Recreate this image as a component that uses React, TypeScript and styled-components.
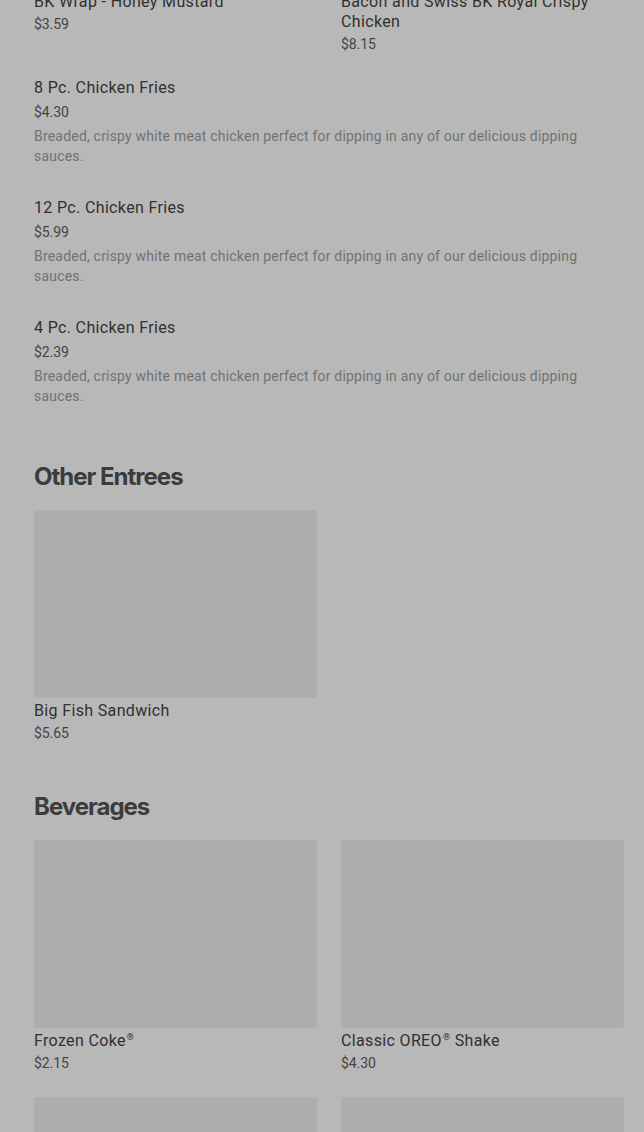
import React from "react";
import styled, { createGlobalStyle } from "styled-components";

const GlobalStyle = createGlobalStyle`
  html, body {
    margin: 0;
    padding: 0;
    background: #b8b8b8;
  }
  body {
    font-family: Roboto, "Liberation Sans", sans-serif;
    overflow: hidden;
  }
`;

type GridItem = { name: string; price: string };
type ListItem = { name: string; price: string; desc: string };

const topRow: GridItem[] = [
  { name: "BK Wrap - Honey Mustard", price: "$3.59" },
  { name: "Bacon and Swiss BK Royal Crispy Chicken", price: "$8.15" },
];

const friesDesc =
  "Breaded, crispy white meat chicken perfect for dipping in any of our delicious dipping sauces.";

const fries: ListItem[] = [
  { name: "8 Pc. Chicken Fries", price: "$4.30", desc: friesDesc },
  { name: "12 Pc. Chicken Fries", price: "$5.99", desc: friesDesc },
  { name: "4 Pc. Chicken Fries", price: "$2.39", desc: friesDesc },
];

const entrees: GridItem[] = [{ name: "Big Fish Sandwich", price: "$5.65" }];

const beverages: GridItem[] = [
  { name: "Frozen Coke®", price: "$2.15" },
  { name: "Classic OREO® Shake", price: "$4.30" },
  { name: "", price: "" },
  { name: "", price: "" },
];

// small raised ® like the menu uses
const withMarks = (text: string) =>
  text.split("®").map((part, i, arr) => (
    <React.Fragment key={i}>
      {part}
      {i < arr.length - 1 && <Mark>®</Mark>}
    </React.Fragment>
  ));

export default function App() {
  return (
    <>
      <GlobalStyle />
      <Page>
        <Section>
          <Grid>
            {topRow.map((it) => (
              <Card key={it.name}>
                <Name>{it.name}</Name>
                <Price>{it.price}</Price>
              </Card>
            ))}
          </Grid>
          <List>
            {fries.map((it) => (
              <Row key={it.name}>
                <Name>{it.name}</Name>
                <ListPrice>{it.price}</ListPrice>
                <Desc>{it.desc}</Desc>
              </Row>
            ))}
          </List>
        </Section>

        <Section $gap={55}>
          <Heading>Other Entrees</Heading>
          <Grid>
            {entrees.map((it) => (
              <Card key={it.name}>
                <Thumb />
                <Name $top>{it.name}</Name>
                <Price>{it.price}</Price>
              </Card>
            ))}
          </Grid>
        </Section>

        <Section $gap={48}>
          <Heading>Beverages</Heading>
          <Grid>
            {beverages.map((it, i) => (
              <Card key={i}>
                <Thumb />
                <Name $top>{withMarks(it.name)}</Name>
                <Price>{it.price}</Price>
              </Card>
            ))}
          </Grid>
        </Section>
      </Page>
    </>
  );
}

const Page = styled.div`
  margin-top: -8px;
  padding: 0 20px 0 34px;
  display: flex;
  flex-direction: column;
`;

const Section = styled.section<{ $gap?: number }>`
  display: flex;
  flex-direction: column;
  margin-top: ${(p) => p.$gap ?? 0}px;
`;

const Heading = styled.h2`
  margin: 0 0 17px;
  font-family: Inter, "Liberation Sans", sans-serif;
  font-size: 24px;
  line-height: 32px;
  font-weight: 700;
  letter-spacing: -1px;
  color: #3b3b3b;
`;

const Grid = styled.div`
  display: grid;
  grid-template-columns: 283px 283px;
  column-gap: 24px;
  row-gap: 24px;
`;

const Card = styled.div`
  display: flex;
  flex-direction: column;
`;

const Thumb = styled.div`
  height: 188px;
  background: #adadad;
  box-shadow: inset 0 0 0 1px #b0b0b0;
`;

const Name = styled.div<{ $top?: boolean }>`
  font-size: 16px;
  line-height: 20px;
  font-weight: 400;
  letter-spacing: 0.35px;
  color: #303030;
  margin-top: ${(p) => (p.$top ? 3 : 0)}px;
  min-height: 20px;
`;

const Mark = styled.span`
  font-size: 9px;
  vertical-align: top;
  line-height: 12px;
  margin-left: 1px;
`;

const Price = styled.div`
  margin-top: 2px;
  font-size: 14px;
  line-height: 20px;
  letter-spacing: -0.1px;
  color: #444;
`;

const List = styled.div`
  display: flex;
  flex-direction: column;
  gap: 32px;
  margin-top: 24px;
`;

const Row = styled.div`
  display: flex;
  flex-direction: column;
  max-width: 552px;
`;

const ListPrice = styled(Price)`
  margin-top: 4px;
`;

const Desc = styled.div`
  margin-top: 4px;
  font-size: 14px;
  line-height: 20px;
  letter-spacing: 0.2px;
  color: #727272;
`;
